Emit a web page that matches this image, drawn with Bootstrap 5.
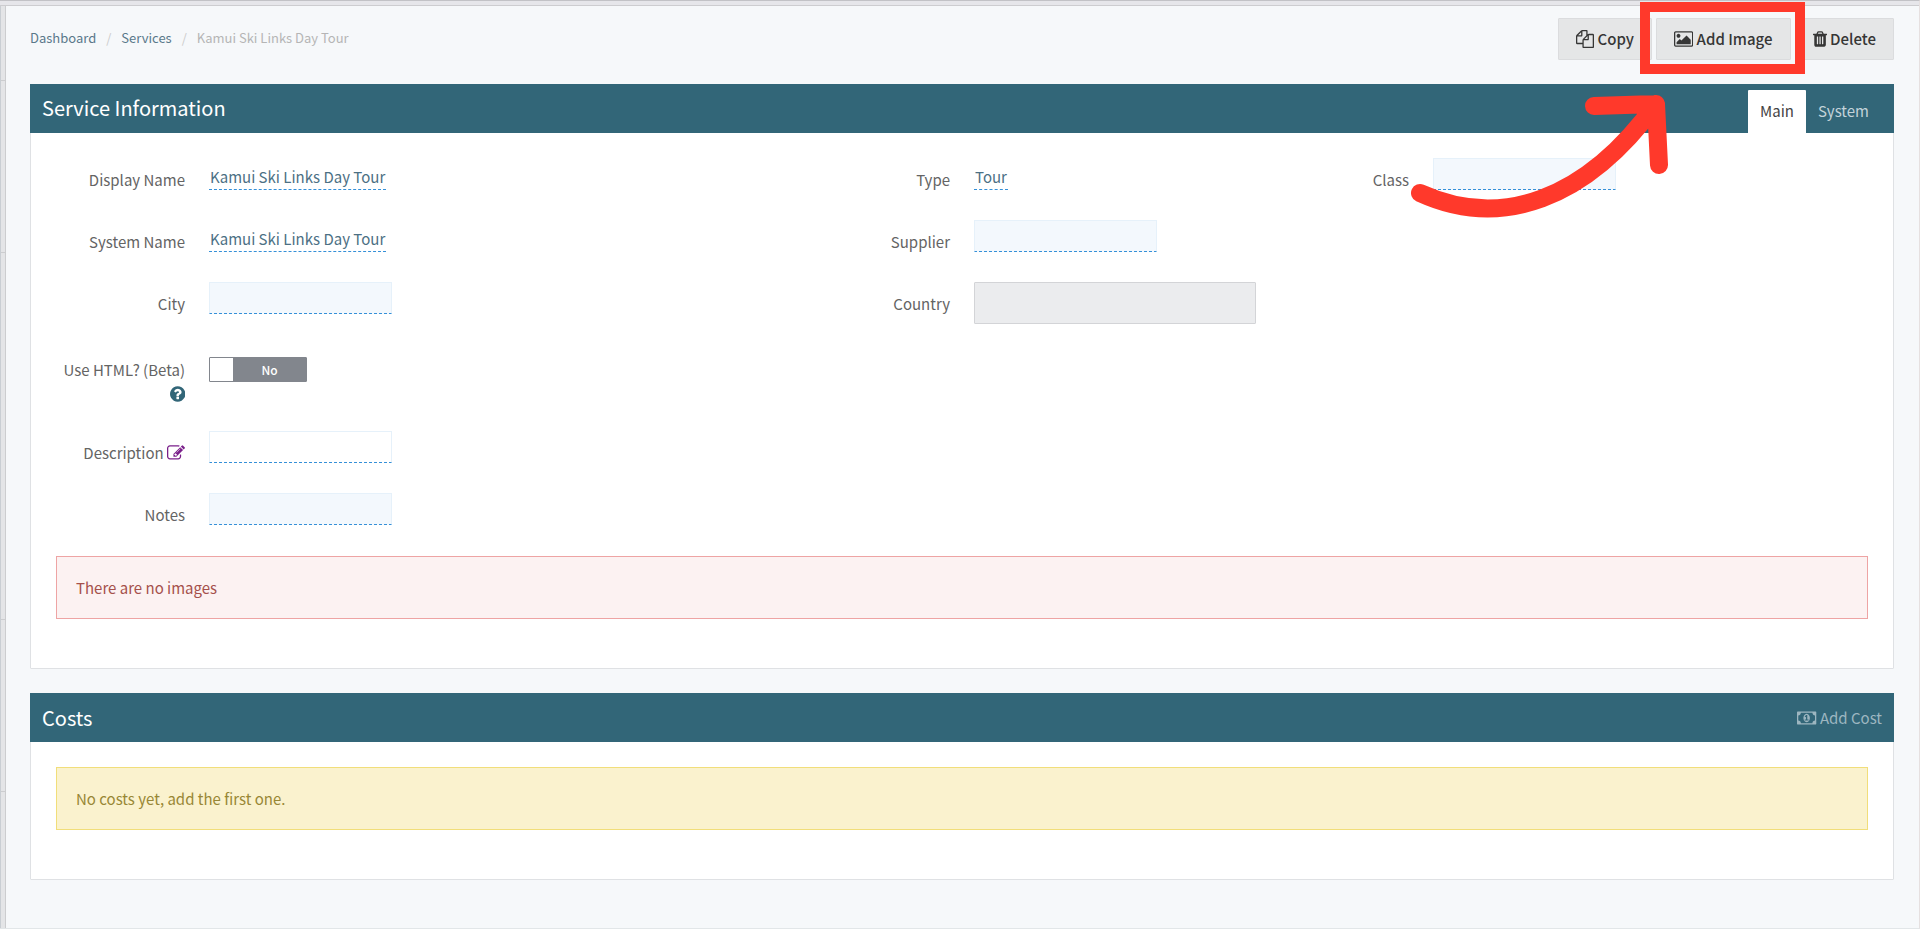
<!DOCTYPE html>
<html lang="en">
<head>
<meta charset="utf-8">
<meta name="viewport" content="width=device-width, initial-scale=1">
<title>Kamui Ski Links Day Tour</title>
<link rel="stylesheet" href="https://cdn.jsdelivr.net/npm/bootstrap@5.3.0/dist/css/bootstrap.min.css">
<style>
:root { --teal: #326678; --ink: #646464; --edit: #3590d8; }
body { background: #f6f8fa; color: var(--ink); font-family: "Noto Sans CJK JP", "Noto Sans", sans-serif; font-size: 15px; line-height: 24px; }
.shell { border-top: 1px solid #c2c2c6; border-right: 1px solid #e6e0e0; border-bottom: 1px solid #e2e6e8; }
.topstrip { height: 5px; background: #e6e6ea; border-bottom: 1px solid #cdcdd0; }
.rail { width: 6px; background: #e4e5e7; border-left: 1px solid #c9ced3; border-right: 1px solid #cccdcf; }
.rail div { border-bottom: 1px solid #cccdcf; }
.rail div:nth-child(1) { height: 75px; }
.rail div:nth-child(2) { height: 172px; }
.rail div:nth-child(3) { height: 367px; }
.rail div:nth-child(4) { height: 172px; }
.content { padding: 12px 25px 46px 24px; }
.breadcrumb { font-size: 13px; --bs-breadcrumb-item-padding-x: 10px; --bs-breadcrumb-divider-color: #ccc; --bs-breadcrumb-item-active-color: #b5b5b5; padding-top: 8px; }
.breadcrumb a { color: #5a788a; text-decoration: none; }
.tool { background: #e5e6e7; border: 1px solid #dbdcde; border-radius: 1px; color: #363636; font-size: 15px; font-weight: 500; line-height: 24px; padding: 8px 17px; }
.fa { height: 18px; fill: currentColor; vertical-align: -3px; }
.callout { position: absolute; inset: -16px -14px -14px -16px; border: 10px solid #ff392b; z-index: 5; pointer-events: none; }
.arrow { position: absolute; left: -250px; top: 72px; z-index: 5; pointer-events: none; fill: none; stroke: #ff392b; stroke-width: 18; stroke-linecap: round; stroke-linejoin: round; }
.panel { --bs-card-border-color: #dfe1e4; --bs-card-border-radius: 1px; --bs-card-inner-border-radius: 0; --bs-card-spacer-x: 25px; --bs-card-spacer-y: 25px; }
.panel .card-header { background: var(--teal); border: 0; margin: -1px -1px 0; height: 49px; padding: 0 12px; color: #fff; }
.panel h2 { font-size: 20px; line-height: 48px; font-weight: 400; }
.panel .card-body { padding-bottom: 49px; }
.nav-tabs { --bs-nav-tabs-border-width: 0; --bs-nav-tabs-border-radius: 1px; --bs-nav-link-padding-x: 12px; --bs-nav-link-padding-y: 9px; --bs-nav-link-color: #c3d3da; --bs-nav-link-hover-color: #fff; --bs-nav-tabs-link-active-color: #444; --bs-nav-tabs-link-active-bg: #fff; margin-right: 1px; }
.nav-tabs .nav-link { height: 43px; margin: 0; }
.addcost { color: #9db6c0; text-decoration: none; }
.field { gap: 24px; min-height: 62px; align-items: flex-start; }
.field > .cap { width: 129px; flex: none; text-align: right; padding-top: 10px; }
.field.tall { min-height: 87px; padding-top: 12px; }
.field.tall > .cap { padding-top: 2px; }
.edit { height: 32px; line-height: 37px; padding: 0 1px; color: #4c7084; text-decoration: none; border-bottom: 1px dashed var(--edit); }
.blank { width: 183px; height: 32px; background: #f3f8fd; border: 1px solid #e6f1fa; border-bottom: 1px dashed var(--edit); }
.blank.plain { background: #fff; }
.locked { height: 42px; background: #ebecee; border: 1px solid #d3d4d7; border-radius: 1px; }
.toggle { width: 98px; height: 25px; margin-top: 1px; background: #82868d; border: 1px solid #82868d; border-radius: 1px; color: #fff; font-size: 12px; font-weight: 500; }
.toggle input { appearance: none; width: 23px; height: 23px; background: #fff; margin: 0; }
.note { --bs-alert-border-radius: 0; --bs-alert-padding-x: 19px; --bs-alert-padding-y: 19px; --bs-alert-margin-bottom: 0; line-height: 23px; }
.note.alert-danger { --bs-alert-bg: #fcf2f2; --bs-alert-border-color: #eea4a4; --bs-alert-color: #a5504b; margin-top: 1px; }
.note.alert-warning { --bs-alert-bg: #faf2ce; --bs-alert-border-color: #f1de7a; --bs-alert-color: #988735; }
</style>
</head>
<body>
<div class="shell min-vh-100 d-flex flex-column">
  <div class="topstrip"></div>
  <div class="d-flex flex-grow-1">
    <div class="rail"><div></div><div></div><div></div><div></div></div>
    <main class="content flex-grow-1">
      <div class="d-flex justify-content-between align-items-start mb-4">
        <nav aria-label="breadcrumb">
          <ol class="breadcrumb mb-0">
            <li class="breadcrumb-item"><a href="#">Dashboard</a></li>
            <li class="breadcrumb-item"><a href="#">Services</a></li>
            <li class="breadcrumb-item active" aria-current="page">Kamui Ski Links Day Tour</li>
          </ol>
        </nav>
        <div class="d-flex gap-1">
          <button type="button" class="btn tool"><svg class="fa" viewBox="0 0 1792 1792"><path d="M1696 384q40 0 68 28t28 68v1216q0 40-28 68t-68 28h-960q-40 0-68-28t-28-68v-288h-544q-40 0-68-28t-28-68v-672q0-40 20-88t48-76l408-408q28-28 76-48t88-20h416q40 0 68 28t28 68v328q68-40 128-40h416zm-544 213l-299 299h299v-299zm-640-384l-299 299h299v-299zm196 647l316-316v-416h-384v416q0 40-28 68t-68 28h-416v640h512v-256q0-40 20-88t48-76zm956 804v-1152h-384v416q0 40-28 68t-68 28h-416v640h896z"/></svg> Copy</button>
          <div class="position-relative">
            <button type="button" class="btn tool"><svg class="fa" viewBox="-64 0 1920 1792"><path d="M576 576q0 80-56 136t-136 56-136-56-56-136 56-136 136-56 136 56 56 136zm1024 384v448h-1408v-192l320-320 160 160 512-512zm96-704h-1600q-13 0-22.500 9.500t-9.500 22.500v1216q0 13 9.500 22.500t22.500 9.500h1600q13 0 22.500-9.500t9.500-22.500v-1216q0-13-9.500-22.500t-22.500-9.500zm160 32v1216q0 66-47 113t-113 47h-1600q-66 0-113-47t-47-113v-1216q0-66 47-113t113-47h1600q66 0 113 47t47 113z"/></svg> Add Image</button>
            <div class="callout"></div>
            <svg class="arrow" width="270" height="130" viewBox="1405 90 270 130"><path d="M1419 193C1500 230 1585 200 1655 104M1593 106L1655 104L1658 165"/></svg>
          </div>
          <button type="button" class="btn tool"><svg class="fa" viewBox="192 0 1408 1792"><path d="M704 1376v-704q0-14-9-23t-23-9h-64q-14 0-23 9t-9 23v704q0 14 9 23t23 9h64q14 0 23-9t9-23zm256 0v-704q0-14-9-23t-23-9h-64q-14 0-23 9t-9 23v704q0 14 9 23t23 9h64q14 0 23-9t9-23zm256 0v-704q0-14-9-23t-23-9h-64q-14 0-23 9t-9 23v704q0 14 9 23t23 9h64q14 0 23-9t9-23zm-544-992h448l-48-117q-7-9-17-11h-317q-10 2-17 11zm928 32v64q0 14-9 23t-23 9h-96v948q0 83-47 143.500t-113 60.500h-832q-66 0-113-58.500t-47-141.500v-952h-96q-14 0-23-9t-9-23v-64q0-14 9-23t23-9h309l70-167q15-37 54-63t79-26h320q40 0 79 26t54 63l70 167h309q14 0 23 9t9 23z"/></svg> Delete</button>
        </div>
      </div>

      <section class="card panel mb-4">
        <div class="card-header d-flex justify-content-between align-items-end">
          <h2 class="mb-0 align-self-start">Service Information</h2>
          <ul class="nav nav-tabs">
            <li class="nav-item"><a class="nav-link active" href="#" aria-current="page">Main</a></li>
            <li class="nav-item"><a class="nav-link" href="#">System</a></li>
          </ul>
        </div>
        <div class="card-body">
          <div class="row">
            <div class="col-5">
              <div class="field d-flex"><span class="cap">Display Name</span><a class="edit" href="#">Kamui Ski Links Day Tour</a></div>
              <div class="field d-flex"><span class="cap">System Name</span><a class="edit" href="#">Kamui Ski Links Day Tour</a></div>
              <div class="field d-flex"><label class="cap" for="city">City</label><input class="blank" id="city" type="text"></div>
              <div class="field tall d-flex">
                <label class="cap" for="html">Use HTML? (Beta) <svg class="fa" viewBox="128 0 1536 1792" color="#326678"><path d="M1024 1376v-192q0-14-9-23t-23-9h-192q-14 0-23 9t-9 23v192q0 14 9 23t23 9h192q14 0 23-9t9-23zm256-672q0-88-55.500-163t-138.500-116-170-41q-243 0-371 213-15 24 8 42l132 100q7 6 19 6 16 0 25-12 53-68 86-92 34-24 86-24 48 0 85.500 26t37.500 59q0 38-20 61t-68 45q-63 28-115.500 86.500t-52.500 125.500v36q0 14 9 23t23 9h192q14 0 23-9t9-23q0-19 21.500-49.500t54.500-49.500q32-18 49-28.500t46-35 44.500-48 28-60.500 12.500-81zm384 192q0 209-103 385.500t-279.500 279.500-385.500 103-385.500-103-279.500-279.500-103-385.500 103-385.500 279.500-279.500 385.500-103 385.500 103 279.500 279.500 103 385.500z"/></svg></label>
                <label class="toggle d-flex align-items-center"><input type="checkbox" role="switch" id="html"><span class="flex-grow-1 text-center">No</span></label>
              </div>
              <div class="field d-flex"><label class="cap" for="desc">Description <svg class="fa" viewBox="0 0 1792 1792" color="#7a1f8a"><path d="M888 1184l116-116-152-152-116 116v56h96v96h56zm440-720q-16-16-33 1l-350 350q-17 17-1 33t33-1l350-350q17-17 1-33zm80 594v190q0 119-84.500 203.500t-203.500 84.500h-832q-119 0-203.500-84.500t-84.500-203.500v-832q0-119 84.500-203.500t203.500-84.500h832q63 0 117 25 15 7 18 23 3 17-9 29l-49 49q-14 14-32 8-23-6-45-6h-832q-66 0-113 47t-47 113v832q0 66 47 113t113 47h832q66 0 113-47t47-113v-126q0-13 9-22l64-64q15-15 35-7t20 29zm-96-738l288 288-672 672h-288v-288zm444 132l-92 92-288-288 92-92q28-28 68-28t68 28l152 152q28 28 28 68t-28 68z"/></svg></label><input class="blank plain" id="desc" type="text"></div>
              <div class="field d-flex"><label class="cap" for="notes">Notes</label><input class="blank" id="notes" type="text"></div>
            </div>
            <div class="col-3">
              <div class="field d-flex"><span class="cap">Type</span><a class="edit" href="#">Tour</a></div>
              <div class="field d-flex"><label class="cap" for="supplier">Supplier</label><input class="blank" id="supplier" type="text"></div>
              <div class="field d-flex"><label class="cap" for="country">Country</label><input class="locked flex-grow-1 w-100" id="country" type="text" disabled></div>
            </div>
            <div class="col-4">
              <div class="field d-flex"><label class="cap" for="class">Class</label><input class="blank" id="class" type="text"></div>
            </div>
          </div>
          <div class="alert alert-danger note" role="alert">There are no images</div>
        </div>
      </section>

      <section class="card panel">
        <div class="card-header d-flex justify-content-between align-items-center">
          <h2 class="mb-0">Costs</h2>
          <a class="addcost" href="#"><svg class="fa" viewBox="-64 0 1920 1792"><path d="M704 1152h384v-96h-128v-448h-114l-148 137 77 80q42-37 55-57h2v288h-128v96zm512-256q0 70-21 142t-59.500 134-101.500 101-138 39-138-39-101.500-101-59.500-134-21-142 21-142 59.500-134 101.500-101 138-39 138 39 101.500 101 59.500 134 21 142zm512 256v-512q-106 0-181-75t-75-181h-1152q0 106-75 181t-181 75v512q106 0 181 75t75 181h1152q0-106 75-181t181-75zm128-832v1152q0 26-19 45t-45 19h-1792q-26 0-45-19t-19-45v-1152q0-26 19-45t45-19h1792q26 0 45 19t19 45z"/></svg> Add Cost</a>
        </div>
        <div class="card-body">
          <div class="alert alert-warning note" role="alert">No costs yet, add the first one.</div>
        </div>
      </section>
    </main>
  </div>
</div>
<script src="https://cdn.jsdelivr.net/npm/bootstrap@5.3.0/dist/js/bootstrap.bundle.min.js"></script>
</body>
</html>
